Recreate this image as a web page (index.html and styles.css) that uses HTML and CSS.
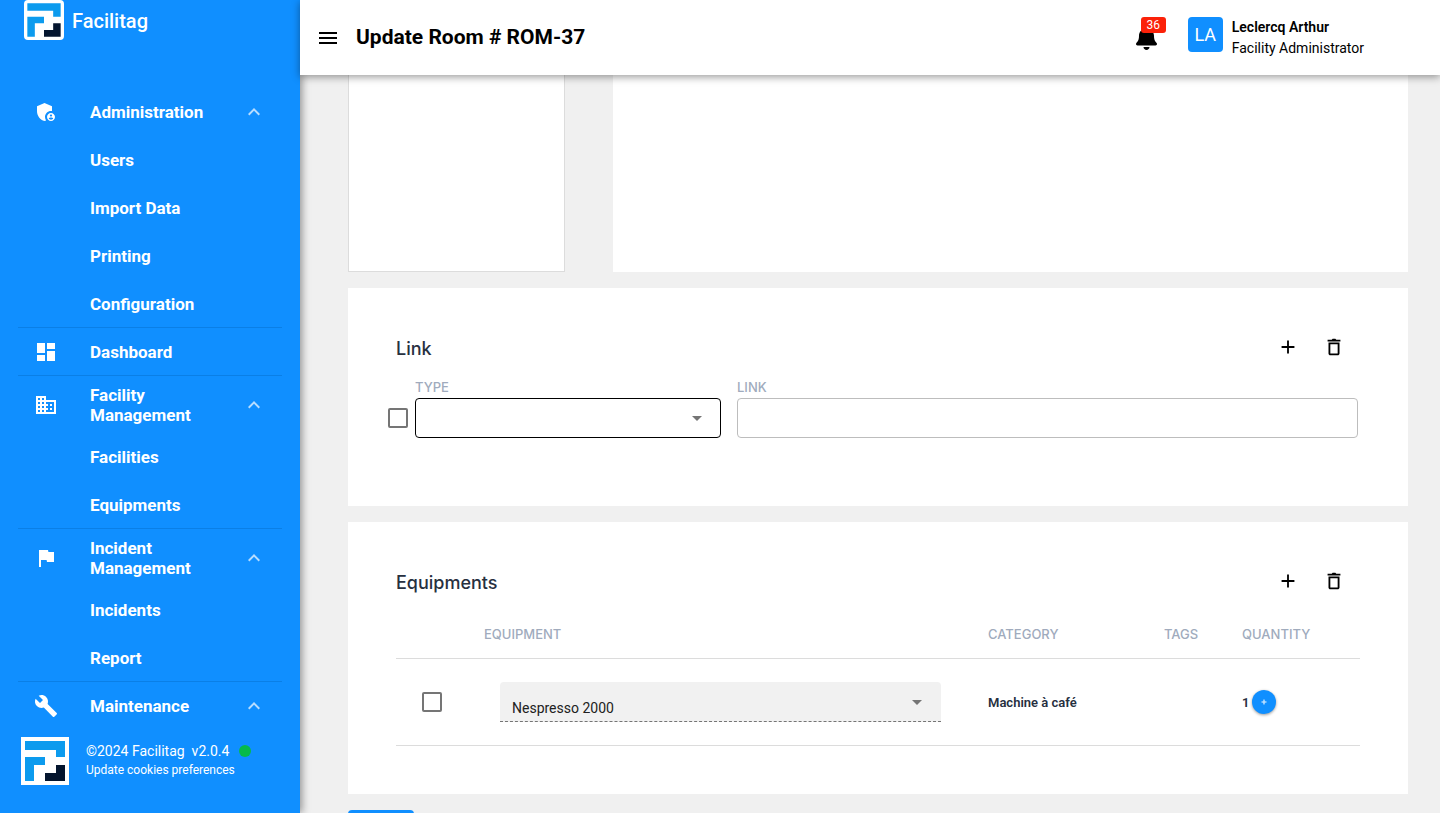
FILE: index.html
```html
<!DOCTYPE html>
<html lang="en">
<head>
    <meta charset="UTF-8">
    <meta name="viewport" content="width=device-width, initial-scale=1.0">
    <title>Facilitag - Update Room</title>
    <link rel="stylesheet" href="styles.css">
</head>
<body>
<svg class="sprite" aria-hidden="true">
    <symbol id="logo" viewBox="0 0 48 48">
        <path fill="#fff" d="M0 0h48v48H0z"/>
        <path fill="#0c9bee" d="M4 4h40v16h-9v-7H4z"/>
        <path fill="#0c9bee" d="M4 20h20v8H13v16H4z"/>
        <path fill="#04152e" d="M35 28h9v16H24v-8h11z"/>
    </symbol>
    <symbol id="chevron" viewBox="0 0 24 24">
        <path fill="currentColor" d="M12 8l-6 6 1.41 1.41L12 10.83l4.59 4.58L18 14z"/>
    </symbol>
    <symbol id="plus" viewBox="0 0 24 24">
        <path fill="currentColor" d="M19 13h-6v6h-2v-6H5v-2h6V5h2v6h6z"/>
    </symbol>
    <symbol id="trash" viewBox="0 0 24 24">
        <path fill="currentColor" d="M5 4h4.5l1-1h3l1 1H19v2H5zM6 7h12v12c0 1.100-.9 2-2 2H8c-1.100 0-2-.9-2-2zm2 2v10h8V9z"/>
    </symbol>
</svg>
<div class="app">
    <aside class="sidebar">
        <div class="brand">
            <svg class="brand-logo"><use href="#logo"/></svg>
            <span>Facilitag</span>
        </div>
        <nav class="menu">
            <a class="menu-item" href="#">
                <svg class="menu-icon" viewBox="0 0 24 24" fill="currentColor"><path d="M17 11c.34 0 .67.04 1 .09V6.270L10.500 3 3 6.270v4.910c0 4.540 3.200 8.790 7.500 9.820.55-.13 1.080-.32 1.600-.55-.69-.98-1.100-2.170-1.100-3.450 0-3.310 2.690-6 6-6z"/><path fill-rule="evenodd" d="M17 13c-2.210 0-4 1.790-4 4s1.790 4 4 4 4-1.790 4-4-1.790-4-4-4zm0 1.380c.62 0 1.120.51 1.120 1.120s-.51 1.120-1.120 1.120-1.120-.51-1.120-1.120.5-1.120 1.120-1.120zm0 5.370c-.93 0-1.740-.46-2.240-1.170.05-.72 1.510-1.080 2.240-1.080s2.190.36 2.240 1.080c-.5.71-1.310 1.170-2.240 1.170z"/></svg>
                <span>Administration</span>
                <svg class="menu-chevron"><use href="#chevron"/></svg>
            </a>
            <a class="menu-item" href="#"><span>Users</span></a>
            <a class="menu-item" href="#"><span>Import Data</span></a>
            <a class="menu-item" href="#"><span>Printing</span></a>
            <a class="menu-item" href="#"><span>Configuration</span></a>
            <hr>
            <a class="menu-item" href="#">
                <svg class="menu-icon" viewBox="0 0 24 24" fill="currentColor"><path d="M3 13h8V3H3zm0 8h8v-6H3zm10 0h8V11h-8zm0-18v6h8V3z"/></svg>
                <span>Dashboard</span>
            </a>
            <hr>
            <a class="menu-item tall" href="#">
                <svg class="menu-icon" viewBox="0 0 24 24" fill="currentColor"><path d="M12 7V3H2v18h20V7zM6 19H4v-2h2zm0-4H4v-2h2zm0-4H4V9h2zm0-4H4V5h2zm4 12H8v-2h2zm0-4H8v-2h2zm0-4H8V9h2zm0-4H8V5h2zm10 12h-8v-2h2v-2h-2v-2h2v-2h-2V9h8zm-2-8h-2v2h2zm0 4h-2v2h2z"/></svg>
                <span>Facility Management</span>
                <svg class="menu-chevron"><use href="#chevron"/></svg>
            </a>
            <a class="menu-item" href="#"><span>Facilities</span></a>
            <a class="menu-item" href="#"><span>Equipments</span></a>
            <hr>
            <a class="menu-item tall" href="#">
                <svg class="menu-icon" viewBox="0 0 24 24" fill="currentColor"><path d="M14.400 6L14 4H5v17h2v-7h5.600l.4 2h7V6z"/></svg>
                <span>Incident Management</span>
                <svg class="menu-chevron"><use href="#chevron"/></svg>
            </a>
            <a class="menu-item" href="#"><span>Incidents</span></a>
            <a class="menu-item" href="#"><span>Report</span></a>
            <hr>
            <a class="menu-item" href="#">
                <svg class="menu-icon" viewBox="0 0 24 24" fill="currentColor"><path d="M22.700 19l-9.100-9.100c.9-2.300.4-5-1.500-6.900-2-2-5-2.400-7.400-1.300L9 6 6 9 1.600 4.700C.4 7.100.9 10.100 2.900 12.100c1.900 1.900 4.600 2.400 6.900 1.500l9.100 9.100c.4.4 1 .4 1.400 0l2.300-2.300c.5-.4.5-1.100.1-1.400z"/></svg>
                <span>Maintenance</span>
                <svg class="menu-chevron"><use href="#chevron"/></svg>
            </a>
        </nav>
        <footer class="sidebar-footer">
            <svg class="footer-logo"><use href="#logo"/></svg>
            <div class="footer-text">
                <div class="version"><span>©2024 Facilitag &nbsp;v2.0.4</span><i class="status"></i></div>
                <a class="cookies" href="#">Update cookies preferences</a>
            </div>
        </footer>
    </aside>

    <div class="page">
        <header class="topbar">
            <button class="icon-button" aria-label="Toggle menu">
                <svg viewBox="0 0 24 24" fill="currentColor"><path d="M3 18h18v-2H3zm0-5h18v-2H3zm0-7v2h18V6z"/></svg>
            </button>
            <h1>Update Room # ROM-37</h1>
            <button class="bell" aria-label="Notifications">
                <svg viewBox="0 0 448 512" fill="currentColor"><path d="M224 512c35.320 0 63.970-28.650 63.970-64H160.030c0 35.350 28.650 64 63.970 64zm215.390-149.710c-19.320-20.760-55.470-51.990-55.470-154.290 0-77.700-54.480-139.900-127.940-155.160V32c0-17.670-14.320-32-31.980-32s-31.980 14.330-31.980 32v20.840C118.560 68.100 64.080 130.300 64.080 208c0 102.300-36.150 133.530-55.470 154.290-6 6.450-8.660 14.160-8.610 21.710.11 16.400 12.980 32 32.100 32h383.800c19.120 0 32-15.600 32.100-32 .05-7.550-2.610-15.270-8.610-21.710z"/></svg>
                <span class="badge">36</span>
            </button>
            <div class="user">
                <div class="avatar">LA</div>
                <div class="user-text">
                    <div class="user-name">Leclercq Arthur</div>
                    <div>Facility Administrator</div>
                </div>
            </div>
        </header>

        <main class="content">
            <div class="details">
                <section class="details-side"></section>
                <section class="details-main"></section>
            </div>

            <section class="card">
                <div class="card-header">
                    <h2>Link</h2>
                    <div class="card-actions">
                        <button class="icon-button small" aria-label="Add link"><svg><use href="#plus"/></svg></button>
                        <button class="icon-button small" aria-label="Delete link"><svg><use href="#trash"/></svg></button>
                    </div>
                </div>
                <div class="link-row">
                    <input class="checkbox" type="checkbox" aria-label="Select link">
                    <div class="field">
                        <label for="linkType">TYPE</label>
                        <div class="select">
                            <select id="linkType">
                                <option value=""></option>
                            </select>
                        </div>
                    </div>
                    <div class="field field-wide">
                        <label for="linkUrl">LINK</label>
                        <input class="text-input" id="linkUrl" type="text">
                    </div>
                </div>
            </section>

            <section class="card">
                <div class="card-header">
                    <h2>Equipments</h2>
                    <div class="card-actions">
                        <button class="icon-button small" aria-label="Add equipment"><svg><use href="#plus"/></svg></button>
                        <button class="icon-button small" aria-label="Delete equipment"><svg><use href="#trash"/></svg></button>
                    </div>
                </div>
                <table class="equipments">
                    <thead>
                    <tr>
                        <th class="col-check"></th>
                        <th>EQUIPMENT</th>
                        <th class="col-category">CATEGORY</th>
                        <th class="col-tags">TAGS</th>
                        <th class="col-quantity">QUANTITY</th>
                    </tr>
                    </thead>
                    <tbody>
                    <tr>
                        <td class="col-check"><input class="checkbox" type="checkbox" aria-label="Select Nespresso 2000"></td>
                        <td class="col-equipment">
                            <div class="select select-filled">
                                <select aria-label="Equipment">
                                    <option>Nespresso 2000</option>
                                </select>
                            </div>
                        </td>
                        <td>Machine à café</td>
                        <td></td>
                        <td>
                            <div class="quantity">
                                <span>1</span>
                                <button class="round-button" aria-label="Increase quantity"><svg><use href="#plus"/></svg></button>
                            </div>
                        </td>
                    </tr>
                    </tbody>
                </table>
            </section>

            <button class="save-button" aria-label="Save"></button>
        </main>
    </div>
</div>
</body>
</html>
```

FILE: styles.css
```css
* {
    box-sizing: border-box;
}
body {
    margin: 0;
    font-family: Roboto, sans-serif;
    font-size: 14px;
    color: #000;
    background-color: #f0f0f0;
}
a {
    color: inherit;
    text-decoration: none;
}
button {
    font: inherit;
    color: inherit;
    background: none;
    border: none;
    padding: 0;
    cursor: pointer;
}
.sprite {
    display: none;
}
.app {
    display: flex;
    height: 100vh;
    overflow: hidden;
}

/* Sidebar */
.sidebar {
    display: flex;
    flex-direction: column;
    flex: 0 0 300px;
    background-color: #108fff;
    color: #fff;
    box-shadow: 2px 0 8px rgba(0, 0, 0, 0.4);
    z-index: 1;
}
.brand {
    display: flex;
    align-items: center;
    gap: 8px;
    padding: 0 24px;
    margin-bottom: 48px;
    font-size: 20px;
    font-weight: 500;
    line-height: 24px;
}
.brand span {
    padding-top: 2px;
}
.brand-logo {
    width: 40px;
    height: 40px;
    border-radius: 4px;
}
.menu {
    flex: 1;
    overflow: hidden;
}
.menu hr {
    height: 1px;
    margin: -1px 18px 0;
    border: none;
    background-color: #0a7fe6;
}
.menu-item {
    display: grid;
    grid-template-columns: 56px 120px 1fr;
    align-items: center;
    height: 48px;
    padding: 0 34px;
    font-size: 17px;
    font-weight: 700;
    line-height: 20px;
}
.menu-item.tall {
    height: 57px;
}
.menu-item span {
    grid-column: 2;
}
.menu-icon {
    width: 24px;
    height: 24px;
}
.menu-chevron {
    width: 24px;
    height: 24px;
    justify-self: end;
    opacity: 0.7;
}
.sidebar-footer {
    display: flex;
    align-items: center;
    gap: 17px;
    padding: 8px 21px 28px;
}
.footer-logo {
    width: 48px;
    height: 48px;
}
.footer-text {
    padding-bottom: 2px;
}
.version {
    display: flex;
    align-items: center;
    gap: 10px;
    font-size: 14px;
    line-height: 20px;
}
.status {
    width: 12px;
    height: 12px;
    border-radius: 50%;
    background-color: #06ba4b;
}
.cookies {
    display: block;
    font-size: 12px;
    line-height: 18px;
}

/* Top bar */
.page {
    display: flex;
    flex-direction: column;
    flex: 1;
    min-width: 0;
}
.topbar {
    display: flex;
    align-items: center;
    flex: 0 0 75px;
    padding: 0 76px 0 16px;
    background-color: #fff;
    box-shadow: 0 2px 8px rgba(0, 0, 0, 0.4);
    z-index: 2;
}
.topbar h1 {
    flex: 1;
    margin: 0 0 0 16px;
    padding-bottom: 2px;
    font-size: 21px;
    font-weight: 700;
}
.icon-button {
    display: flex;
    width: 24px;
    height: 24px;
}
.icon-button svg {
    width: 100%;
    height: 100%;
}
.icon-button.small {
    width: 22px;
    height: 22px;
}
.bell {
    position: relative;
    display: flex;
    margin-right: 31px;
}
.bell svg {
    width: 21px;
    height: 24px;
}
.badge {
    position: absolute;
    top: -9px;
    left: 5px;
    width: 25px;
    height: 16px;
    border-radius: 3px;
    background-color: #fb2109;
    color: #fff;
    font-size: 12px;
    line-height: 16px;
    text-align: center;
}
.user {
    display: flex;
    gap: 9px;
}
.avatar {
    width: 35px;
    height: 35px;
    border-radius: 4px;
    background-color: #108fff;
    color: #fff;
    font-size: 18px;
    line-height: 35px;
    text-align: center;
}
.user-text {
    line-height: 21px;
}
.user-name {
    font-weight: 600;
}

/* Content */
.content {
    display: flex;
    flex-direction: column;
    gap: 16px;
    flex: 1;
    min-height: 0;
    padding: 0 32px 0 48px;
    overflow: hidden;
}
.content > * {
    flex-shrink: 0;
}
.details {
    display: grid;
    grid-template-columns: 217px 1fr;
    gap: 48px;
    min-height: 197px;
}
.details-side {
    background-color: #fff;
    border: 1px solid #dcdcdc;
    border-top: none;
}
.details-main {
    background-color: #fff;
}
.card {
    padding: 48px;
    background-color: #fff;
    font-family: Inter, sans-serif;
}
.card-header {
    display: flex;
    justify-content: space-between;
    height: 40px;
}
.card h2 {
    margin: 0;
    font-size: 18px;
    font-weight: 500;
    line-height: 26px;
    color: #27303f;
}
.card-actions {
    display: flex;
    gap: 24px;
    padding-right: 15px;
}
.link-row {
    display: flex;
    align-items: flex-end;
    margin: 0 2px 20px -8px;
}
.link-row .checkbox {
    margin: 0 7px 10px 0;
}
.field {
    flex: 0 0 306px;
}
.field-wide {
    flex: 1;
    margin-left: 16px;
}
.field label {
    display: block;
    font-size: 13px;
    font-weight: 500;
    line-height: 22px;
    color: #a0abbd;
}
.checkbox {
    appearance: none;
    display: block;
    width: 20px;
    height: 20px;
    margin: 0;
    border: 2px solid #757575;
    border-radius: 2px;
    background-color: #fff;
}
.text-input {
    display: block;
    width: 100%;
    height: 40px;
    padding: 0 12px;
    border: 1px solid #bdbdbd;
    border-radius: 4px;
}
.select {
    position: relative;
}
.select select {
    appearance: none;
    display: block;
    width: 100%;
    height: 40px;
    padding: 0 12px;
    border: 1px solid #000;
    border-radius: 4px;
    background-color: #fff;
    color: #212121;
    font-family: Roboto, sans-serif;
    font-size: 14px;
}
.select::after {
    content: "";
    position: absolute;
    top: 18px;
    right: 19px;
    border: 5px solid transparent;
    border-top-color: #757575;
    border-bottom: none;
    pointer-events: none;
}
.select-filled select {
    padding: 13px 12px 0;
    border: none;
    border-bottom: 1px dashed #757575;
    border-radius: 4px 4px 0 0;
    background-color: #f1f1f1;
}

/* Equipments table */
.equipments {
    width: 100%;
    table-layout: fixed;
    border-collapse: separate;
    border-spacing: 0;
}
.equipments th {
    height: 49px;
    padding: 0 16px;
    border-bottom: 1px solid #dcdcdc;
    font-size: 13px;
    font-weight: 500;
    text-align: left;
    color: #a0abbd;
}
.equipments td {
    height: 87px;
    padding: 0 16px;
    border-bottom: 1px solid #dcdcdc;
    font-family: Roboto, sans-serif;
    font-size: 13px;
    font-weight: 600;
    color: #27303f;
}
.equipments .col-check {
    width: 72px;
    padding: 0 26px;
}
.equipments .col-equipment {
    padding: 0 31px 0 32px;
}
.col-category {
    width: 176px;
}
.col-tags {
    width: 78px;
}
.col-quantity {
    width: 134px;
}
.quantity {
    display: flex;
    align-items: center;
    gap: 3px;
}
.round-button {
    display: flex;
    align-items: center;
    justify-content: center;
    width: 24px;
    height: 24px;
    border-radius: 50%;
    background-color: #108fff;
    color: #fff;
    box-shadow: 0 1px 3px rgba(0, 0, 0, 0.4);
}
.round-button svg {
    width: 8px;
    height: 8px;
    stroke: #fff;
    stroke-width: 1;
}
.save-button {
    width: 66px;
    height: 36px;
    border-radius: 4px;
    background-color: #108fff;
}
```
